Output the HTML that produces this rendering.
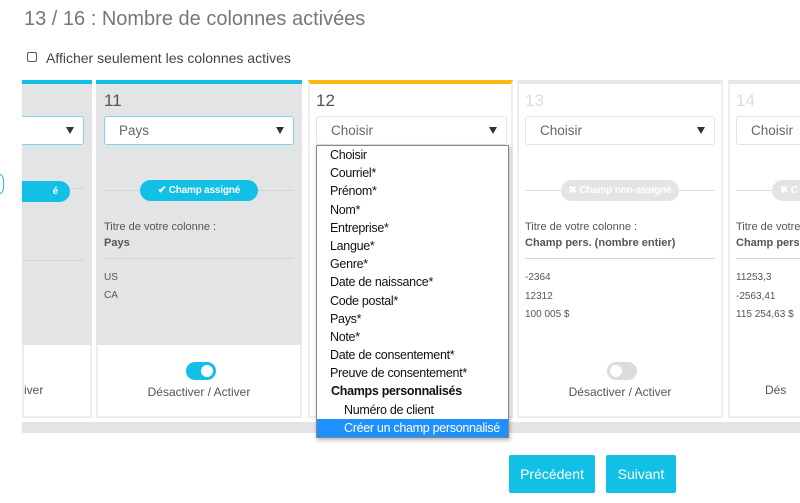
<!DOCTYPE html><html><head><meta charset="utf-8"><style>
*{box-sizing:border-box;margin:0;padding:0}
html,body{width:800px;height:503px;overflow:hidden}
body{background:#fff;font-family:"Liberation Sans",sans-serif;position:relative;color:#555}
.a{position:absolute}
.col{position:absolute;top:80px;height:265px;overflow:hidden}
.num{position:absolute;top:7px;left:8px;font-size:17px;color:#555}
.sel{position:absolute;top:32px;height:29px;border:1px solid #e3e3e3;background:#fff;border-radius:3px;font-size:13.5px;color:#666;padding:6px 0 0 14px;white-space:nowrap}
.sel i{position:absolute;right:9px;top:10px;width:0;height:0;border-left:4px solid transparent;border-right:4px solid transparent;border-top:7px solid #333}
.line{position:absolute;height:1px;background:#d4d4d4}
.pill{position:absolute;height:21px;border-radius:11px;font-size:10px;font-weight:bold;color:#fff;text-align:center;line-height:21px;white-space:nowrap;letter-spacing:-0.2px}
.t{position:absolute;font-size:11px;color:#555;line-height:16px}
.bot{position:absolute;top:345px;height:73px;border:2px solid #eee;border-top:none;background:#fff;text-align:center;font-size:12px;color:#555;overflow:hidden}
.dd{position:absolute;left:316px;top:145px;width:193px;height:293px;background:#fff;border:1px solid #888;box-shadow:1px 2px 4px rgba(0,0,0,.3);font-size:12.5px;color:#111;letter-spacing:-0.3px;white-space:nowrap;overflow:hidden}
.dd div{height:18.2px;line-height:18px;padding-left:13px}
.btn{position:absolute;top:455px;height:38px;background:#12c0e6;color:#fff;font-size:14px;text-align:center;line-height:38px;border-radius:2px}
</style></head><body>
<div class="a" style="left:24px;top:8px;font-size:20px;color:#777">13 / 16 : Nombre de colonnes activées</div>
<div class="a" style="left:27px;top:52px;width:10px;height:10px;border:1px solid #555;border-radius:2px"></div>
<div class="a" style="left:46px;top:50px;font-size:14px;color:#444">Afficher seulement les colonnes actives</div>

<!-- partial col -->
<div class="col" style="left:22px;width:70px;background:#e3e4e6;border-top:4px solid #12c0e6">
<div class="sel" style="left:-10px;width:72px;border-color:#7fd7ee"><i></i></div>
<div class="line" style="left:0;width:62px;top:104px"></div>
<div class="pill" style="left:-40px;width:88px;top:97px;background:#12c0e6;text-align:right;padding-right:12px">é</div>
<div class="line" style="left:0;width:62px;top:176px"></div>
</div>
<div class="a" style="left:-10px;top:173px;width:14px;height:22px;border:1px solid #12c0e6;border-radius:11px"></div>
<div class="bot" style="left:22px;width:70px;padding-top:38px;text-align:left">iver</div>

<!-- col 11 -->
<div class="col" style="left:96px;width:206px;background:#e3e4e6;border-top:4px solid #12c0e6">
<div class="num">11</div>
<div class="sel" style="left:8px;width:190px;border-color:#7fd7ee">Pays<i></i></div>
<div class="line" style="left:8px;width:190px;top:106px"></div>
<div class="pill" style="left:44px;width:118px;top:96px;background:#12c0e6">✔ Champ assigné</div>
<div class="t" style="left:8px;top:135px">Titre de votre colonne :<br><b>Pays</b></div>
<div class="line" style="left:8px;width:190px;top:174px"></div>
<div class="t" style="left:8px;top:185px;font-size:10px;line-height:18px">US<br>CA</div>
</div>
<div class="bot" style="left:96px;width:206px">
<div class="a" style="left:88px;top:17px;width:30px;height:18px;border-radius:9px;background:#12c0e6"><div class="a" style="right:3px;top:3px;width:12px;height:12px;border-radius:6px;background:#fff"></div></div>
<div class="a" style="left:0;width:202px;top:40px">Désactiver / Activer</div></div>

<!-- col 12 -->
<div class="col" style="left:308px;width:205px;background:#fff;border-top:4px solid #fbb812;border-left:2px solid #eee;border-right:2px solid #eee">
<div class="num" style="left:6px">12</div>
<div class="sel" style="left:6px;width:191px">Choisir<i></i></div>
</div>
<div class="bot" style="left:308px;width:205px"></div>

<!-- col 13 -->
<div class="col" style="left:517px;width:206px;background:#fff;border-top:4px solid #e8e8e8;border-left:2px solid #eee;border-right:2px solid #eee">
<div class="num" style="left:6px;color:#ddd">13</div>
<div class="sel" style="left:6px;width:190px">Choisir<i></i></div>
<div class="line" style="left:6px;width:190px;top:106px;background:#ddd"></div>
<div class="pill" style="left:42px;width:118px;top:96px;background:#e4e4e4">✖ Champ non-assigné</div>
<div class="t" style="left:6px;top:135px">Titre de votre colonne :<br><b>Champ pers. (nombre entier)</b></div>
<div class="line" style="left:6px;width:190px;top:174px"></div>
<div class="t" style="left:6px;top:185px;font-size:10px;line-height:18.5px">-2364<br>12312<br>100 005 $</div>
</div>
<div class="bot" style="left:517px;width:206px">
<div class="a" style="left:88px;top:17px;width:30px;height:18px;border-radius:9px;background:#dcdcdc"><div class="a" style="left:3px;top:3px;width:12px;height:12px;border-radius:6px;background:#fff"></div></div>
<div class="a" style="left:0;width:202px;top:40px">Désactiver / Activer</div></div>

<!-- col 14 -->
<div class="col" style="left:728px;width:72px;background:#fff;border-top:4px solid #e8e8e8;border-left:2px solid #eee">
<div class="num" style="left:6px;color:#ddd">14</div>
<div class="sel" style="left:6px;width:100px">Choisir</div>
<div class="line" style="left:6px;width:90px;top:106px;background:#ddd"></div>
<div class="pill" style="left:42px;width:60px;top:96px;background:#e4e4e4;text-align:left;padding-left:8px">✖ C</div>
<div class="t" style="left:6px;top:135px;white-space:nowrap">Titre de votre colonne :<br><b>Champ pers. (nombre</b></div>
<div class="line" style="left:6px;width:90px;top:174px"></div>
<div class="t" style="left:6px;top:185px;font-size:10px;line-height:18.5px;white-space:nowrap">11253,3<br>-2563,41<br>115 254,63 $</div>
</div>
<div class="bot" style="left:728px;width:72px;text-align:left;padding:38px 0 0 35px;border-right:none">Dés</div>

<!-- scrollbar -->
<div class="a" style="left:22px;top:422px;width:778px;height:11px;background:#e3e4e6"></div>

<!-- dropdown -->
<div class="dd">
<div>Choisir</div><div>Courriel*</div><div>Prénom*</div><div>Nom*</div><div>Entreprise*</div><div>Langue*</div><div>Genre*</div><div>Date de naissance*</div><div>Code postal*</div><div>Pays*</div><div>Note*</div><div>Date de consentement*</div><div>Preuve de consentement*</div>
<div style="font-weight:bold;padding-left:14px">Champs personnalisés</div>
<div style="padding-left:27px">Numéro de client</div>
<div style="padding-left:27px;background:#1e90ff;color:#fff">Créer un champ personnalisé</div>
</div>

<div class="btn" style="left:509px;width:86px">Précédent</div>
<div class="btn" style="left:606px;width:70px">Suivant</div>
</body></html>
